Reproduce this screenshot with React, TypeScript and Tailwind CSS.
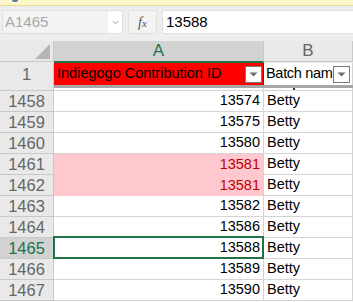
import React from "react";

const rows: { n: number; v: string; pink?: boolean; sel?: boolean }[] = [
  { n: 1458, v: "13574" },
  { n: 1459, v: "13575" },
  { n: 1460, v: "13580" },
  { n: 1461, v: "13581", pink: true },
  { n: 1462, v: "13581", pink: true },
  { n: 1463, v: "13582" },
  { n: 1464, v: "13586" },
  { n: 1465, v: "13588", sel: true },
  { n: 1466, v: "13589" },
  { n: 1467, v: "13590" },
];

function FilterBtn() {
  return (
    <div className="w-[17px] h-[17px] border border-[#7a7a7a] bg-white flex items-center justify-center shrink-0">
      <svg width="9" height="5" viewBox="0 0 9 5">
        <path d="M0.5 0.5 L8.5 0.5 L4.5 4.5 Z" fill="#6b6b6b" />
      </svg>
    </div>
  );
}

export default function App() {
  const font = { fontFamily: '"Liberation Sans", Arial, sans-serif' };
  return (
    <div className="w-[353px] h-[302px] overflow-hidden bg-white relative" style={font}>
      {/* yellow message bar */}
      <div className="h-[6px] bg-[#fdf7c9] border-b border-[#e9dc94] relative">
        <div className="absolute left-[12px] top-0 w-[6px] h-[2px] bg-[#5a7ca8] rounded-b-sm" />
      </div>
      {/* formula bar */}
      <div className="h-[35px] bg-[#eeeeee] flex items-start pt-[4px] pl-[2px]">
        <div className="h-[24px] w-[121px] flex border border-[#e0e0e0] bg-[#f3f3f3]">
          <div className="flex-1 flex items-center pl-[2px] text-[15px] text-[#a8a8a8]">A1465</div>
          <div className="w-[14px] bg-white flex items-center justify-center">
            <svg width="7" height="5" viewBox="0 0 7 5">
              <path d="M0.8 1 L3.5 3.8 L6.2 1" stroke="#9a9a9a" strokeWidth="1" fill="none" />
            </svg>
          </div>
        </div>
        <div className="ml-[5px] h-[24px] w-[29px] border border-[#e0e0e0] bg-[#f3f3f3] flex items-center justify-center">
          <span className="text-[14px] italic text-[#555]" style={{ fontFamily: '"Liberation Serif", serif' }}>
            f<span className="text-[11px]">x</span>
          </span>
        </div>
        <div className="ml-[5px] h-[24px] flex-1 bg-white border-y border-l border-[#e0e0e0] flex items-center pl-[3px] text-[15px] text-black">
          13588
        </div>
      </div>
      {/* column headers */}
      <div className="flex h-[22px] bg-[#e9e9e9]">
        <div className="w-[54px] h-[21px] border-r border-b border-[#c9c9c9] relative bg-[#e9e9e9]">
          <svg className="absolute right-[3px] bottom-[2px]" width="15" height="15" viewBox="0 0 15 15">
            <path d="M15 0 L15 15 L0 15 Z" fill="#b4b4b4" />
          </svg>
        </div>
        <div className="w-[210px] bg-[#d2d2d2] border-r border-[#c9c9c9] border-b-2 border-b-[#217346] flex items-center justify-center text-[17px] text-[#217346]">
          A
        </div>
        <div className="w-[89px] h-[21px] border-r border-b border-[#c9c9c9] flex items-center justify-center text-[17px] text-[#666]">
          B
        </div>
      </div>
      {/* row 1 */}
      <div className="flex h-[22px]">
        <div className="w-[54px] bg-[#e9e9e9] border-r border-[#c9c9c9] flex items-center justify-center text-[16.5px] text-[#666]">
          1
        </div>
        <div className="w-[210px] bg-[#ff0000] border-r border-[#b40000] flex items-center pl-[3px] pr-[1px] text-[14.5px] text-black">
          <span className="flex-1 whitespace-nowrap">Indiegogo Contribution ID</span>
          <FilterBtn />
        </div>
        <div className="w-[89px] bg-white border-r border-[#d4d4d4] flex items-center pl-[2px] pr-[2px] text-[14.5px] text-black">
          <span className="flex-1 whitespace-nowrap tracking-[-0.3px]">Batch nam</span>
          <FilterBtn />
        </div>
      </div>
      {/* freeze line */}
      <div className="flex h-[3px]">
        <div className="w-[54px] bg-[#e9e9e9] border-r border-[#c9c9c9]" />
        <div className="flex-1 bg-[#a6a6a6]" />
      </div>
      {/* partial row */}
      <div className="flex h-[3px] overflow-hidden">
        <div className="w-[54px] bg-[#e9e9e9] border-r border-b border-[#c9c9c9]" />
        <div className="w-[210px] border-r border-b border-[#d4d4d4]" />
        <div className="w-[89px] border-r border-b border-[#d4d4d4] relative">
          <div className="absolute left-[29px] top-0 w-[2px] h-[2px] bg-[#333]" />
        </div>
      </div>
      {rows.map((r) => (
        <div key={r.n} className="flex h-[21px]">
          <div
            className={
              r.sel
                ? "w-[54px] bg-[#d2d2d2] border-r border-b border-[#c9c9c9] flex items-center justify-center text-[16.5px] text-[#217346]"
                : "w-[54px] bg-[#e9e9e9] border-r border-b border-[#c9c9c9] flex items-center justify-center text-[16.5px] text-[#666]"
            }
          >
            {r.n}
          </div>
          <div
            className={
              r.pink
                ? "w-[210px] bg-[#ffc7ce] border-r border-[#d4d4d4] flex items-center justify-end pr-[3px] text-[14.5px] text-[#c00000]"
                : r.sel
                ? "w-[210px] relative border-r border-b border-[#d4d4d4] flex items-center justify-end pr-[3px] text-[14.5px] text-black"
                : "w-[210px] border-r border-b border-[#d4d4d4] flex items-center justify-end pr-[3px] text-[14.5px] text-black"
            }
          >
            {r.sel && (
              <div className="absolute left-[-1px] top-[-2px] right-[-1px] bottom-[-1px] border-2 border-[#217346]" />
            )}
            <span className="relative">{r.v}</span>
          </div>
          <div className="w-[89px] border-r border-b border-[#d4d4d4] flex items-center pl-[3px] text-[14.5px] text-black">
            Betty
          </div>
        </div>
      ))}
    </div>
  );
}
